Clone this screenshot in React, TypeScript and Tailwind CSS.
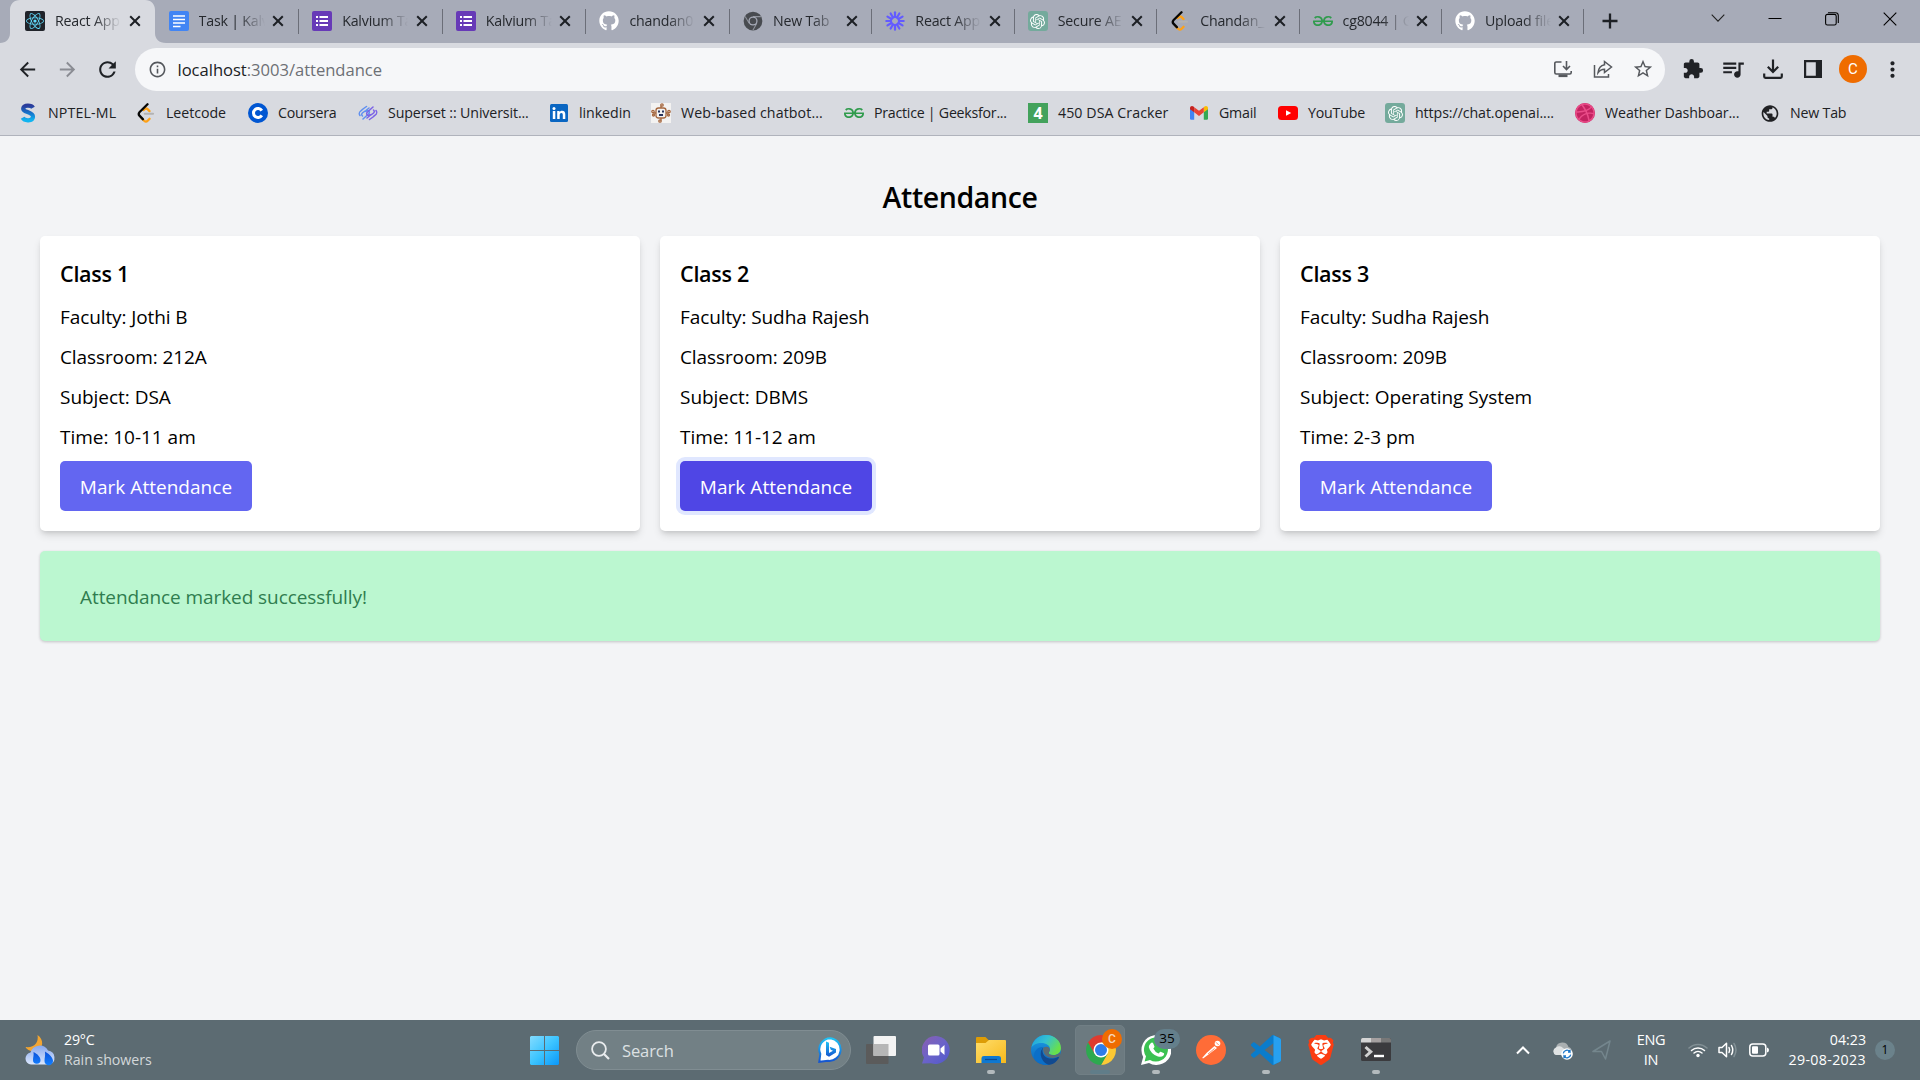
import React, { ReactNode } from "react";
import { FaGithub, FaReact, FaDribbble } from "react-icons/fa";
import { SiGeeksforgeeks, SiOpenai, SiBrave } from "react-icons/si";
import {
  MdExtension,
  MdQueueMusic,
  MdStarBorder,
  MdRefresh,
  MdArrowBack,
  MdArrowForward,
  MdInfoOutline,
  MdMoreVert,
  MdPublic,
} from "react-icons/md";

const ReactFav = () => (
  <div className="flex size-5 items-center justify-center rounded-xs bg-[#20232a]">
    <FaReact size={18} color="#61dafb" />
  </div>
);

const DocFav = () => (
  <svg width="20" height="20" viewBox="0 0 20 20">
    <rect width="20" height="20" rx="2" fill="#4285f4" />
    <path d="M4 5h12M4 8.5h12M4 12h12M4 15.5h7.5" stroke="#fff" strokeWidth="1.7" />
  </svg>
);

const FormFav = () => (
  <svg width="20" height="20" viewBox="0 0 20 20">
    <rect width="20" height="20" rx="2" fill="#673ab7" />
    <path d="M7.5 6H16M7.5 10H16M7.5 14H16M4 6h2M4 10h2M4 14h2" stroke="#fff" strokeWidth="2" />
  </svg>
);

const GitHubFav = () => <FaGithub size={20} color="#fff" />;

const ChromeGrey = () => (
  <svg width="20" height="20" viewBox="0 0 48 48">
    <circle cx="24" cy="24" r="22.5" fill="#484b50" />
    <path d="M24 13.5H43M33.2 29.2L23.7 46M14.8 29.2L5.2 13" stroke="#8f939c" strokeWidth="2.5" />
    <circle cx="24" cy="24" r="11" fill="#a7abb8" />
    <circle cx="24" cy="24" r="8" fill="#484b50" />
  </svg>
);

const BurstFav = () => (
  <svg width="20" height="20" viewBox="0 0 20 20" stroke="#635bff" strokeWidth="2.2" strokeLinecap="round">
    {Array.from({ length: 12 }, (_, i) => (
      <line key={i} x1="10" y1="1.3" x2="10" y2="6" transform={`rotate(${i * 30} 10 10)`} />
    ))}
    <circle cx="10" cy="10" r="4" fill="none" strokeWidth="2" />
  </svg>
);

const OpenAiFav = () => (
  <div className="flex size-5 items-center justify-center rounded-[3px] bg-[#74aa9c]">
    <SiOpenai size={15} color="#fff" />
  </div>
);

const LeetFav = () => (
  <svg width="20" height="20" viewBox="0 0 24 24" fill="none" strokeLinecap="round" strokeLinejoin="round">
    <path d="M9 8.5L10.3 7.3c1.2-1 2.5-.9 3.6.1l2.3 2.3M7 18.5l2.8 2.8c1.3 1.2 3 1.2 4.2 0l2.3-2.4" stroke="#ffa116" strokeWidth="2.7" />
    <path d="M10.5 13h10" stroke="#b3b3b3" strokeWidth="2.4" />
    <path d="M13.8 1.5L4.4 10.8c-1.4 1.5-1.4 3.2 0 4.7l3.8 3.9" stroke="#070706" strokeWidth="2.8" />
  </svg>
);

const GfgFav = () => <SiGeeksforgeeks size={20} color="#2f9b4c" />;

type Tab = { title: string; icon: ReactNode; active?: boolean };

const tabs: Tab[] = [
  { title: "React App", icon: <ReactFav />, active: true },
  { title: "Task | Kalv", icon: <DocFav /> },
  { title: "Kalvium Ta", icon: <FormFav /> },
  { title: "Kalvium Ta", icon: <FormFav /> },
  { title: "chandan0", icon: <GitHubFav /> },
  { title: "New Tab", icon: <ChromeGrey /> },
  { title: "React App", icon: <BurstFav /> },
  { title: "Secure AE", icon: <OpenAiFav /> },
  { title: "Chandan_", icon: <LeetFav /> },
  { title: "cg8044 | G", icon: <GfgFav /> },
  { title: "Upload file", icon: <GitHubFav /> },
];

function CloseX() {
  return (
    <svg width="12" height="12" viewBox="0 0 12 12" className="shrink-0">
      <path d="M1.2 1.2l9.6 9.6M10.8 1.2L1.2 10.8" stroke="#1d2025" strokeWidth="2" />
    </svg>
  );
}

function TabItem({ tab, index }: { tab: Tab; index: number }) {
  return (
    <div className={`relative flex h-[42px] shrink-0 items-center ${index < 5 ? "w-[143.6px]" : "w-[142.4px]"}`}>
      {tab.active && (
        <svg className="absolute -left-3 top-0" width="168" height="43" viewBox="0 0 168 43">
          <path d="M0 43C6 43 10 39 10 33V10C10 4 14 0 20 0H145C151 0 155 4 155 10V33C155 39 159 43 166 43Z" fill="#d8dae0" />
        </svg>
      )}
      <div className="relative ml-[13px] size-5 shrink-0">{tab.icon}</div>
      <div className="relative ml-[10px] w-[66px] overflow-hidden whitespace-nowrap text-[14.2px] leading-5 tracking-[-0.2px] text-[#25282d] [mask-image:linear-gradient(to_right,#000_58%,transparent_100%)]">
        {tab.title}
      </div>
      <div className="relative ml-[7.5px] flex">
        <CloseX />
      </div>
      {index > 0 && <div className="ml-auto h-[25px] w-px bg-[#6b6e78]" />}
    </div>
  );
}

function TabStrip() {
  return (
    <div className="flex h-[43px] bg-[#a7abb8]">
      <div className="ml-3 flex">
        {tabs.map((t, i) => (
          <TabItem key={i} tab={t} index={i} />
        ))}
      </div>
      <svg className="ml-[17.5px] mt-[13px]" width="16" height="16" viewBox="0 0 16 16">
        <path d="M8 .5v15M.5 8h15" stroke="#1d2025" strokeWidth="2.3" />
      </svg>
      <svg className="ml-[93px] mt-[13px]" width="14" height="10" viewBox="0 0 14 10">
        <path d="M.7 1.7L7 8.2l6.3-6.5" fill="none" stroke="#222" strokeWidth="1.1" />
      </svg>
      <svg className="ml-[43px] mt-[13px]" width="14" height="10" viewBox="0 0 14 10">
        <path d="M.5 5.5h13" stroke="#000" />
      </svg>
      <svg className="ml-[43px] mt-3" width="14" height="14" viewBox="0 0 14 14" fill="none" stroke="#000" strokeWidth="1.1">
        <rect x=".6" y="2.4" width="10.6" height="10.6" rx="1.8" />
        <path d="M3 .7h7.5a2.8 2.8 0 0 1 2.8 2.8V11" />
      </svg>
      <svg className="ml-[44px] mt-3" width="14" height="14" viewBox="0 0 14 14">
        <path d="M.7.7l12.6 12.6M13.3.7L.7 13.3" stroke="#000" strokeWidth="1.1" />
      </svg>
    </div>
  );
}

function Slot({ children }: { children: ReactNode }) {
  return <div className="flex h-full w-10 shrink-0 items-center justify-center">{children}</div>;
}

function Toolbar() {
  return (
    <div className="flex h-[52px] items-center pl-[7px]">
      <Slot><MdArrowBack size={23} color="#1f2226" /></Slot>
      <Slot><MdArrowForward size={23} color="#8a8c93" /></Slot>
      <Slot><MdRefresh size={25} color="#1f2226" /></Slot>
      <div className="ml-2 flex h-[43px] w-[1530px] items-center rounded-full bg-[#f6f7f9]">
        <MdInfoOutline className="ml-[12.5px]" size={19} color="#54575c" />
        <div className="ml-[11px] mt-px text-[16.6px] leading-6 tracking-[-0.03px] text-[#202124]">
          localhost<span className="text-[#6d7075]">:3003/attendance</span>
        </div>
        <div className="ml-auto mr-[11.5px] flex items-center gap-[20px] text-[#55585d]">
          <svg width="20" height="20" viewBox="0 0 20 20" fill="none" stroke="currentColor" strokeWidth="1.6">
            <path d="M8.500 3H3.200A1.400 1.400 0 0 0 1.800 4.400V13.600A1.400 1.400 0 0 0 3.200 15H16.800A1.400 1.400 0 0 0 18.200 13.600V12" />
            <path d="M13.500 2V10M10 7l3.500 3.500L17 7" />
            <path d="M5.500 16.800h9" strokeWidth="2.600" />
          </svg>
          <svg width="20" height="20" viewBox="0 0 20 20" fill="none" stroke="currentColor" strokeWidth="1.500">
            <path d="M1.500 6V18H15.500V15" />
            <path d="M11.500 2.500L18.500 8L11.500 13.500V10.300C8.800 10.300 6.800 11.300 5 13.800C5.500 9.500 7.800 6.400 11.500 5.800Z" />
          </svg>
          <MdStarBorder size={22} className="-ml-px" />
        </div>
      </div>
      <div className="ml-[7.5px] flex h-full items-center text-[#202226]">
        <Slot><MdExtension size={22} /></Slot>
        <Slot><MdQueueMusic size={26} /></Slot>
        <Slot>
          <svg width="20" height="20" viewBox="0 0 20 20" fill="none" stroke="currentColor" strokeWidth="2.200">
            <path d="M10 .5V12.500M4.800 7.800L10 13l5.200-5.200M1.200 14.500V17.600A1.200 1.200 0 0 0 2.400 18.800H17.600A1.200 1.200 0 0 0 18.800 17.600V14.500" />
          </svg>
        </Slot>
        <Slot>
          <svg width="18" height="18" viewBox="0 0 18 18" fill="none" stroke="currentColor" strokeWidth="2.200">
            <path d="M1.100 1.100H16.900V16.900H1.100Z" />
            <path d="M11.800 1H17V17H11.800Z" fill="currentColor" stroke="none" />
          </svg>
        </Slot>
        <Slot>
          <div className="ml-px flex size-7 shrink-0 items-center justify-center rounded-full bg-[#ef6c00] font-['Roboto'] text-[15px] text-white">C</div>
        </Slot>
        <Slot><MdMoreVert size={25} /></Slot>
      </div>
    </div>
  );
}

const Nptel = () => (
  <svg width="20" height="20" viewBox="0 0 20 20">
    <defs>
      <linearGradient id="np" x1="0" y1="0" x2="0" y2="1">
        <stop offset="0" stopColor="#2b3c9b" />
        <stop offset=".55" stopColor="#1479d0" />
        <stop offset="1" stopColor="#11b4f0" />
      </linearGradient>
    </defs>
    <path d="M15 4.800C13.500 2.200 6 1.600 5.200 5.500C4.600 9.500 15.200 8.600 15 13.800C14.700 18.400 6.500 18.200 4.600 14.800" fill="none" stroke="url(#np)" strokeWidth="4.200" />
  </svg>
);

const Coursera = () => (
  <svg width="20" height="20" viewBox="0 0 20 20">
    <circle cx="10" cy="10" r="10" fill="#0056d2" />
    <path d="M13.800 7.600a4.500 4.500 0 1 0 0 4.800" fill="none" stroke="#fff" strokeWidth="3" />
  </svg>
);

const Superset = () => (
  <svg width="20" height="20" viewBox="0 0 20 20" fill="none" strokeWidth="1.500" strokeLinecap="round">
    <path d="M2 12.500C-.5 9 3 8 5 6L8.500 3.500M4.500 13C2 10.500 6 9 8 7.500L11 5M5 16L10.500 11C12.500 9 10 6 8 8.500" stroke="#5f8ff0" />
    <path d="M18 7.500c2.500 3.500-1 4.500-3 6.500L11.500 16.500M15.500 7c2.500 2.500-1.500 4-3.500 5.500L9 15M15 4L9.500 9c-2 2 .5 5 2.500 2.500" stroke="#7b63e6" />
  </svg>
);

const LinkedIn = () => (
  <svg width="20" height="20" viewBox="0 0 20 20">
    <rect x="1" y="1" width="18" height="18" rx="1.500" fill="#0a66c2" />
    <path d="M3.800 8H6.300V16H3.800ZM8.200 8H10.600V9.200C11.200 8.300 12.100 7.800 13.200 7.800C15.500 7.800 16.300 9.200 16.300 11.500V16H13.800V12C13.800 10.800 13.500 10 12.400 10C11.300 10 10.700 10.800 10.700 12V16H8.200Z" fill="#fff" />
    <circle cx="5" cy="5.400" r="1.500" fill="#fff" />
  </svg>
);

const Chatbot = () => (
  <svg width="20" height="20" viewBox="0 0 20 20">
    <rect width="20" height="20" fill="#f3f2f1" />
    <g fill="none" stroke="#a5673f" strokeWidth="1.300">
      <rect x="5" y="5" width="10" height="10" rx="2.500" />
      <path d="M10 5V2.500M10 15v2.500M5 10H2.500M15 10h2.500" />
      <circle cx="11" cy="2" r="1.200" />
      <circle cx="9" cy="18" r="1.200" />
      <circle cx="2" cy="8.500" r="1.200" />
      <circle cx="18" cy="8.500" r="1.200" />
      <circle cx="2.500" cy="12" r="1" />
      <circle cx="17.500" cy="12" r="1" />
    </g>
    <path d="M7 7.500h2v2H7zM11 7.500h2v2h-2zM8 11h4v2H8z" fill="#28335c" />
  </svg>
);

const Four = () => (
  <div className="flex size-5 items-center justify-center bg-[#43a25c] font-['Open_Sans'] text-[16px] font-bold leading-none text-white">4</div>
);

const Gmail = () => (
  <svg width="20" height="20" viewBox="0 0 20 20">
    <path d="M1 5.500V15.500A1.200 1.200 0 0 0 2.200 16.700H5.200V8.500Z" fill="#4285f4" />
    <path d="M14.800 16.700H17.800A1.200 1.200 0 0 0 19 15.500V5.500L14.800 8.500Z" fill="#34a853" />
    <path d="M14.800 4.200V9.300L19 6.200V5C19 3 16.900 2.300 15.500 3.500Z" fill="#fbbc04" />
    <path d="M5.200 9.300V4.200L10 7.800L14.800 4.200V9.300L10 13Z" fill="#ea4335" />
    <path d="M1 5V6.200L5.200 9.300V4.200L4.500 3.500C3.100 2.300 1 3 1 5Z" fill="#c5221f" />
  </svg>
);

const YouTube = () => (
  <svg width="20" height="20" viewBox="0 0 20 20">
    <rect x="0" y="3" width="20" height="14" rx="3.500" fill="#f00" />
    <path d="M8 7.200L13.200 10L8 12.800Z" fill="#fff" />
  </svg>
);

const Dribbble = () => (
  <div className="flex size-5 items-center justify-center rounded-full bg-[#c32361]">
    <FaDribbble size={20} color="#ea4c89" />
  </div>
);

const bookmarks = [
  { t: "NPTEL-ML", w: "w-[68px]", s: "tracking-[0.15px]", i: <Nptel /> },
  { t: "Leetcode", w: "w-[62px]", s: "tracking-[-0.05px]", i: <LeetFav /> },
  { t: "Coursera", w: "w-[60px]", s: "tracking-[-0.25px]", i: <Coursera /> },
  { t: "Superset :: Universit...", w: "w-[141px]", s: "tracking-[-0.12px]", i: <Superset /> },
  { t: "linkedin", w: "w-[52px]", s: "tracking-[-0.05px]", i: <LinkedIn /> },
  { t: "Web-based chatbot...", w: "w-[143px]", s: "tracking-[0.1px]", i: <Chatbot /> },
  { t: "Practice | Geeksfor...", w: "w-[134px]", s: "tracking-[-0.25px]", i: <GfgFav /> },
  { t: "450 DSA Cracker", w: "w-[111px]", s: "tracking-[0.07px]", i: <Four /> },
  { t: "Gmail", w: "w-[39px]", s: "tracking-[-0.2px]", i: <Gmail /> },
  { t: "YouTube", w: "w-[57px]", s: "tracking-[-0.2px]", i: <YouTube /> },
  { t: "https://chat.openai....", w: "w-[140px]", s: "tracking-[-0.08px]", i: <OpenAiFav /> },
  { t: "Weather Dashboar...", w: "w-[135px]", s: "tracking-[-0.08px]", i: <Dribbble /> },
  { t: "New Tab", w: "w-[60px]", s: "tracking-[-0.2px]", i: <MdPublic size={21} color="#202124" /> },
];

function BookmarkBar() {
  return (
    <div className="flex h-[36px] items-center gap-[20px] pl-[18px]">
      {bookmarks.map((b) => (
        <div key={b.t} className="flex shrink-0 items-center gap-[10px]">
          <div className="flex size-5 shrink-0 items-center justify-center">{b.i}</div>
          <div className={`whitespace-nowrap text-[14.2px] leading-5 text-[#202124] ${b.w} ${b.s}`}>{b.t}</div>
        </div>
      ))}
    </div>
  );
}

const classes = [
  { name: "Class 1", faculty: "Jothi B", room: "212A", subject: "DSA", time: "10-11 am" },
  { name: "Class 2", faculty: "Sudha Rajesh", room: "209B", subject: "DBMS", time: "11-12 am", focused: true },
  { name: "Class 3", faculty: "Sudha Rajesh", room: "209B", subject: "Operating System", time: "2-3 pm" },
];

function ClassCard({ c }: { c: (typeof classes)[number] }) {
  return (
    <div className="h-[295px] rounded-[5px] bg-white p-5 shadow-[0_5px_8px_-1px_rgb(0_0_0/0.12),0_2.5px_5px_-2px_rgb(0_0_0/0.12)]">
      <h3 className="mb-[11px] text-[21.5px] font-semibold leading-[35px] tracking-[-0.25px]">{c.name}</h3>
      <div className="mb-[9px] flex flex-col gap-[10px] text-[19px] leading-[30px] tracking-[-0.1px]">
        <p>Faculty: {c.faculty}</p>
        <p>Classroom: {c.room}</p>
        <p className="tracking-[-0.03px]">Subject: {c.subject}</p>
        <p className="tracking-[-0.03px]">Time: {c.time}</p>
      </div>
      <button
        className={
          "h-[50px] w-[192px] rounded-[5px] pt-px text-[19px] font-medium leading-[30px] tracking-[0.03px] text-white " +
          (c.focused ? "bg-[#4f46e5] ring-4 ring-[#e0e7ff]" : "bg-[#6366f1]")
        }
      >
        Mark Attendance
      </button>
    </div>
  );
}

function Page() {
  return (
    <main className="h-[884px] bg-[#f3f4f6] px-10 pt-[41px] text-black">
      <h2 className="mb-[19px] text-center text-[28.5px] font-semibold leading-10 tracking-[-0.4px]">Attendance</h2>
      <div className="grid grid-cols-3 gap-5">
        {classes.map((c) => (
          <ClassCard key={c.name} c={c} />
        ))}
      </div>
      <div className="mt-5 flex h-[90px] items-center rounded-[5px] bg-[#bbf7d0] px-10 pt-0.5 text-[19px] leading-[30px] tracking-[-0.08px] text-[#2f7d4f] shadow-[0_1px_3px_rgb(0_0_0/0.2)]">
        Attendance marked successfully!
      </div>
    </main>
  );
}

const Weather = () => (
  <svg width="31" height="31" viewBox="0 0 31 31">
    <defs>
      <linearGradient id="cl" x1="0" y1="0" x2="0" y2="1">
        <stop offset="0" stopColor="#86a8ee" />
        <stop offset="1" stopColor="#dbe7fd" />
      </linearGradient>
      <linearGradient id="dr" x1="0" y1="0" x2="0" y2="1">
        <stop offset="0" stopColor="#0a50d8" />
        <stop offset="1" stopColor="#1480ff" />
      </linearGradient>
    </defs>
    <path d="M12.500 0C19 4 19 14 11 16C6 17 2 15 .5 12C9 13 14 8 12.500 0Z" fill="#f2a531" />
    <path d="M6 29.500A6 6 0 0 1 5.500 17.600A9.500 9.500 0 0 1 23 15.500A7.200 7.200 0 0 1 24.500 29.500Z" fill="url(#cl)" />
    <path d="M8.500 17C12.500 19 15.500 22 15.500 25A3.700 3.700 0 0 1 8 25C8 22.500 9 20 8.500 17ZM20 16.500C25 19.500 28 23 28 26A4.200 4.200 0 0 1 19.500 26C19.500 23 20.500 20.500 20 16.500Z" fill="url(#dr)" />
  </svg>
);

const WinLogo = () => (
  <svg width="29" height="29" viewBox="0 0 29 29">
    <defs>
      <linearGradient id="wl" x1="0" y1="0" x2="29" y2="29" gradientUnits="userSpaceOnUse">
        <stop offset="0" stopColor="#84dcff" />
        <stop offset=".5" stopColor="#3cc4ff" />
        <stop offset="1" stopColor="#0a97fa" />
      </linearGradient>
    </defs>
    <path d="M1 0H14V14H0V1ZM15 0H28L29 1V14H15ZM0 15H14V29H1L0 28ZM15 15H29V28L28 29H15Z" fill="url(#wl)" />
  </svg>
);

const Bing = () => (
  <svg width="25" height="26" viewBox="0 0 25 26">
    <defs>
      <linearGradient id="bi" x1="0" y1="0" x2="0" y2="1">
        <stop offset="0" stopColor="#1fc3f5" />
        <stop offset="1" stopColor="#1555cf" />
      </linearGradient>
    </defs>
    <path d="M12.500 1.200A11.200 11.200 0 1 1 10 23.800L1.300 24.800L2.300 17A11.200 11.200 0 0 1 12.500 1.200Z" fill="#fff" stroke="url(#bi)" strokeWidth="2" />
    <path d="M8 4.500L11 5.700V16L15 13.800L12.800 12.800L11.600 9.700L18 12V15.500L11 19.800L8 18Z" fill="url(#bi)" />
  </svg>
);

const TaskView = () => (
  <svg width="30" height="28" viewBox="0 0 30 28">
    <rect x="0" y="8" width="22.500" height="20" rx="1" fill="#5b5b5b" />
    <rect x="7.500" y="0" width="22.500" height="20" rx="1" fill="#f3f3f3" />
    <rect x="7.500" y="8" width="15" height="12" fill="#b6b6b6" />
  </svg>
);

const Meet = () => (
  <svg width="28" height="28" viewBox="0 0 28 28">
    <defs>
      <linearGradient id="mt" x1="0" y1="0" x2="1" y2="1">
        <stop offset="0" stopColor="#8a5fb0" />
        <stop offset=".5" stopColor="#6b63c9" />
        <stop offset="1" stopColor="#5058cc" />
      </linearGradient>
    </defs>
    <path d="M14 0A14 14 0 1 1 9 27.200L0 27.500L2 21.500A14 14 0 0 1 14 0Z" fill="url(#mt)" />
    <rect x="6" y="8.500" width="11.500" height="11" rx="1.500" fill="#fff" />
    <path d="M18.500 12.500L22.500 9V19L18.500 15.500Z" fill="#fff" />
  </svg>
);

const Explorer = () => (
  <svg width="30" height="28" viewBox="0 0 30 28">
    <defs>
      <linearGradient id="fo" x1="0" y1="0" x2="1" y2="1">
        <stop offset="0" stopColor="#ffdd6b" />
        <stop offset="1" stopColor="#f7b91b" />
      </linearGradient>
    </defs>
    <path d="M0 2Q0 1 1 1H9.500L12.500 4H29V12H0Z" fill="#dd9c06" />
    <path d="M0 7H9.500L13 4H29Q30 4 30 5V27H0Z" fill="url(#fo)" />
    <path d="M5.500 27V22Q5.500 20 8 20H22.500Q25 20 25 22V27Z" fill="#0f78d0" />
    <path d="M9 23.500H21" stroke="#0a4a94" strokeWidth="1.200" />
  </svg>
);

const Edge = () => (
  <svg width="30" height="30" viewBox="0 0 30 30">
    <defs>
      <linearGradient id="eg" x1="0" y1="0" x2="1" y2=".5">
        <stop offset="0" stopColor="#1b9de2" />
        <stop offset=".5" stopColor="#34c1d2" />
        <stop offset="1" stopColor="#69e04a" />
      </linearGradient>
      <linearGradient id="eb" x1="0" y1="0" x2="0" y2="1">
        <stop offset="0" stopColor="#1ba1e8" />
        <stop offset="1" stopColor="#0c60b8" />
      </linearGradient>
    </defs>
    <circle cx="15" cy="15" r="15" fill="url(#eb)" />
    <path d="M.5 12.500C2 5 8 0 15 0C23.500 0 30 6 30 13C30 17.500 26.500 20 22.500 20C19 20 17.500 18.700 17.800 17.500C18 16.800 19 16 19 14C19 10.500 15 8 10.500 8C5.500 8 2 10 .5 12.500Z" fill="url(#eg)" />
    <path d="M12.500 12C9 14 8.500 19 11 23C13 27 17 29 20 29.200C15 31 8 29.500 4 25C1 19 5 11.500 12.500 12Z" fill="#0b6fc8" />
    <path d="M12.500 12.500C11 14.500 11.200 18 13.500 21C17 24.500 23 24 26.800 22Q28.500 21.500 27.800 23C25 28 20 30.500 17 29.500C10 27 7 16 12.500 12.500Z" fill="#114a90" />
    <path d="M12.500 12.500C16 10.500 19.500 12.500 18.800 15.500C18.300 17 17.300 17.500 18 18.800C19 20.500 25 21.500 29 17.500L30 21L22 23C15 22.500 11 18 12.500 12.500Z" fill="#5c6b72" />
  </svg>
);

const Chrome = () => (
  <svg width="30" height="30" viewBox="2 2 44 44">
    <path d="M43.050 13A22 22 0 0 0 4.950 13L14.470 29.500L24 24L24 13Z" fill="#de3b2f" />
    <path d="M43.050 13A22 22 0 0 1 24 46L33.530 29.500L24 24V13Z" fill="#fcc934" />
    <path d="M4.950 13A22 22 0 0 0 24 46L33.530 29.500L24 24L14.470 29.500Z" fill="#2da94f" />
    <circle cx="24" cy="24" r="11" fill="#fff" />
    <circle cx="24" cy="24" r="8.800" fill="#2f7de9" />
  </svg>
);

const WhatsApp = () => (
  <svg width="30" height="30" viewBox="0 0 30 30">
    <path d="M0 30L2.200 22A15 15 0 1 1 8 28Z" fill="#fff" />
    <path d="M3.600 26.400L5 21.300A12 12 0 1 1 9 25Z" fill="#3bc151" />
    <path d="M9.500 8.500Q11 7 12 8L13.500 11.500Q13.500 12.500 12.300 13.500Q14 17 17.500 18.500L19 17Q19.500 16.500 20.300 16.900L23 18.300Q23.500 19 22.500 20.500Q20.500 22.500 17 21.500Q9.500 19 7.800 12Q7.800 10 9.500 8.500Z" fill="#fff" />
  </svg>
);

const Postman = () => (
  <svg width="30" height="30" viewBox="0 0 30 30">
    <circle cx="15" cy="15" r="15" fill="#ff6c37" />
    <circle cx="21.500" cy="8.500" r="2.800" fill="#fff" />
    <path d="M18.500 11L21 13L12.500 19.500L7 23.500L6.300 22.800L10.500 18Z" fill="#fff" />
    <path d="M18.500 13.500L12 19M20 7.300L22.700 10" stroke="#ff6c37" strokeWidth=".8" />
  </svg>
);

const VsCode = () => (
  <svg width="30" height="30" viewBox="0 0 24 24">
    <path
      fill="#0a7ccb"
      d="M23.150 2.587L18.210.21a1.494 1.494 0 0 0-1.705.29l-9.460 8.630-4.120-3.128a.999.999 0 0 0-1.276.057L.327 7.261A1 1 0 0 0 .326 8.740L3.899 12 .326 15.260a1 1 0 0 0 .001 1.479L1.650 17.940a.999.999 0 0 0 1.276.057l4.120-3.128 9.460 8.630a1.492 1.492 0 0 0 1.704.290l4.942-2.377A1.500 1.500 0 0 0 24 20.060V3.939a1.500 1.500 0 0 0-.850-1.352zm-5.146 14.861L10.826 12l7.178-5.448v10.896z"
    />
    <path d="M18 .15L23.150 2.587A1.500 1.500 0 0 1 24 3.939V20.060A1.500 1.500 0 0 1 23.150 21.410L18 23.850Z" fill="#27a0ef" />
  </svg>
);

const Brave = () => (
  <div className="relative flex size-[30px] items-center justify-center">
    <svg className="absolute" width="26" height="30" viewBox="0 0 26 30">
      <path d="M7 3H19L23 9L20 20L13 26L6 20L3 9Z" fill="#fff" />
    </svg>
    <SiBrave className="relative" size={30} color="#fb3d12" />
  </div>
);

const Terminal = () => (
  <svg width="30" height="24" viewBox="0 0 30 24">
    <rect width="30" height="23" rx="1.500" fill="#3b3b3e" />
    <path d="M0 4.500V1.500Q0 0 1.500 0H10V4.500Z" fill="#d5d5d5" />
    <path d="M10 0H20V4.500H10Z" fill="#a5a0a0" />
    <path d="M20 0H28.500Q30 0 30 1.500V4.500H20Z" fill="#777" />
    <path d="M4.500 9L9.800 13.800L4.500 18.500" fill="none" stroke="#d0d0d0" strokeWidth="3" />
    <path d="M13 18H23" stroke="#fff" strokeWidth="2.400" />
  </svg>
);

const apps: { icon: ReactNode; running?: boolean; active?: boolean; badge?: ReactNode }[] = [
  { icon: <TaskView /> },
  { icon: <Meet /> },
  { icon: <Explorer />, running: true },
  { icon: <Edge /> },
  {
    icon: <Chrome />,
    active: true,
    badge: (
      <div className="absolute left-[29px] top-[9px] flex size-5 items-center justify-center rounded-full bg-[#ef6c00] font-['Roboto'] text-[12px] font-medium text-[#f7d7bd]">C</div>
    ),
  },
  {
    icon: <WhatsApp />,
    running: true,
    badge: (
      <div className="absolute left-[26px] top-[9px] flex h-5 w-[26px] items-center justify-center rounded-full bg-[#647f8b] text-[13.500px] leading-none text-black">35</div>
    ),
  },
  { icon: <Postman /> },
  { icon: <VsCode />, running: true },
  { icon: <Brave /> },
  { icon: <Terminal />, running: true },
];

function Taskbar() {
  return (
    <footer className="flex h-[60px] items-center bg-[#5c6b72] text-white">
      <div className="flex w-[530px] items-center pl-[25px]">
        <Weather />
        <div className="ml-2 flex flex-col text-[14.200px] leading-5 tracking-[-0.03px]">
          <span className="tracking-[-0.2px]">29°C</span>
          <span className="text-[#d3d8da]">Rain showers</span>
        </div>
      </div>
      <WinLogo />
      <div className="ml-[17px] flex h-10 w-[275px] items-center rounded-full border border-[#808d92] bg-[#728085]">
        <svg className="ml-[14px]" width="19" height="19" viewBox="0 0 19 19" fill="none" stroke="#e9ecee" strokeWidth="1.800">
          <circle cx="8" cy="8" r="6.900" />
          <path d="M13 13l5 5" strokeWidth="2.200" />
        </svg>
        <span className="ml-3 mt-px text-[16.500px] leading-6 tracking-[-0.1px] text-[#dde1e3]">Search</span>
        <div className="ml-auto mr-[7px]">
          <Bing />
        </div>
      </div>
      <div className="ml-[2px] flex">
        {apps.map((a, i) => (
          <div key={i} className="relative flex h-[60px] w-[55px] shrink-0 items-center justify-center">
            {a.active && <div className="absolute left-[2px] top-[5px] h-[50px] w-[50px] rounded-[5px] border border-[#717f85] bg-[#6c7a80]" />}
            <div className="relative flex">{a.icon}</div>
            {a.badge}
            {a.running && <div className="absolute bottom-[6px] left-[23.500px] h-1 w-2 rounded-full bg-[#b3babd]" />}
            {a.active && <div className="absolute bottom-[6px] left-[17px] h-1 w-5 rounded-full bg-[#607d89]" />}
          </div>
        ))}
      </div>
      <div className="ml-auto flex items-center">
        <svg width="14" height="9" viewBox="0 0 14 9">
          <path d="M1 7.500L7 1.500L13 7.500" fill="none" stroke="#fff" strokeWidth="2" />
        </svg>
        <svg className="ml-[22px] mt-0.5" width="21" height="18" viewBox="0 0 21 18">
          <path d="M4 13A4 4 0 0 1 4 5.500A6.500 6.500 0 0 1 16.500 5A4.200 4.200 0 0 1 17 13Z" fill="#a9afb1" />
          <path d="M4 13A4 4 0 0 1 4 5.500A5 5 0 0 1 11 6L15 9V13Z" fill="#dfe2e3" />
          <circle cx="15" cy="12" r="5.800" fill="#fff" />
          <path d="M11.300 11.300A3.800 3.800 0 0 1 18 9.600V7.800M18 10H16M18.700 12.700A3.800 3.800 0 0 1 12 14.400V16.200M12 14H14" stroke="#1b76c8" strokeWidth="1.300" fill="none" />
        </svg>
        <svg className="ml-[19px]" width="19" height="20" viewBox="0 0 19 20">
          <path d="M18 1L1 11.500H9.500L13.500 19Z" fill="none" stroke="#74868d" strokeWidth="1.500" strokeLinejoin="round" />
        </svg>
        <div className="ml-6 w-[32px] text-center text-[14.500px] leading-5 tracking-[-0.3px]">
          ENG
          <br />
          IN
        </div>
        <svg className="ml-[20.500px]" width="20" height="16" viewBox="0 0 20 16" fill="none" strokeLinecap="round">
          <path d="M1 6A13 13 0 0 1 19 6" stroke="#829095" strokeWidth="1.500" />
          <path d="M3.500 8.500A9.500 9.500 0 0 1 16.500 8.500M6 11A6 6 0 0 1 14 11" stroke="#fff" strokeWidth="1.500" />
          <circle cx="10" cy="13.500" r="1.700" fill="#fff" />
        </svg>
        <svg className="ml-[10px]" width="20" height="18" viewBox="0 0 20 18" fill="none" stroke="#fff" strokeWidth="1.500" strokeLinecap="round" strokeLinejoin="round">
          <path d="M1 6.500H4L8.500 2.200V15.800L4 11.500H1Z" />
          <path d="M11 6.500Q12.300 9 11 11.500M13.500 4.500Q16 9 13.500 13.500" />
          <path d="M16 2.500Q20 9 16 15.500" stroke="#829095" />
        </svg>
        <svg className="ml-[11px]" width="20" height="14" viewBox="0 0 20 14">
          <rect x=".8" y="1" width="16" height="12" rx="3" fill="none" stroke="#fff" strokeWidth="1.500" />
          <rect x="3" y="3.200" width="6" height="7.600" rx="1" fill="#fff" />
          <path d="M18 4.500Q20 5 20 7Q20 9 18 9.500Z" fill="#fff" />
        </svg>
        <div className="ml-[13.500px] w-[84px] whitespace-nowrap text-right text-[14.200px] leading-5">
          04:23
          <br />
          <span className="tracking-[0.35px]">29-08-2023</span>
        </div>
        <div className="ml-[9px] mr-[25px] flex size-5 items-center justify-center rounded-full bg-[#6b828b] text-[12px] leading-none text-black">1</div>
      </div>
    </footer>
  );
}

export default function App() {
  return (
    <div className="flex h-[1080px] w-[1920px] flex-col overflow-hidden font-['Open_Sans','Noto_Sans',sans-serif]">
      <header className="h-[136px] border-b border-[#b0b3bc] bg-[#d8dae0]">
        <TabStrip />
        <Toolbar />
        <BookmarkBar />
      </header>
      <Page />
      <Taskbar />
    </div>
  );
}
